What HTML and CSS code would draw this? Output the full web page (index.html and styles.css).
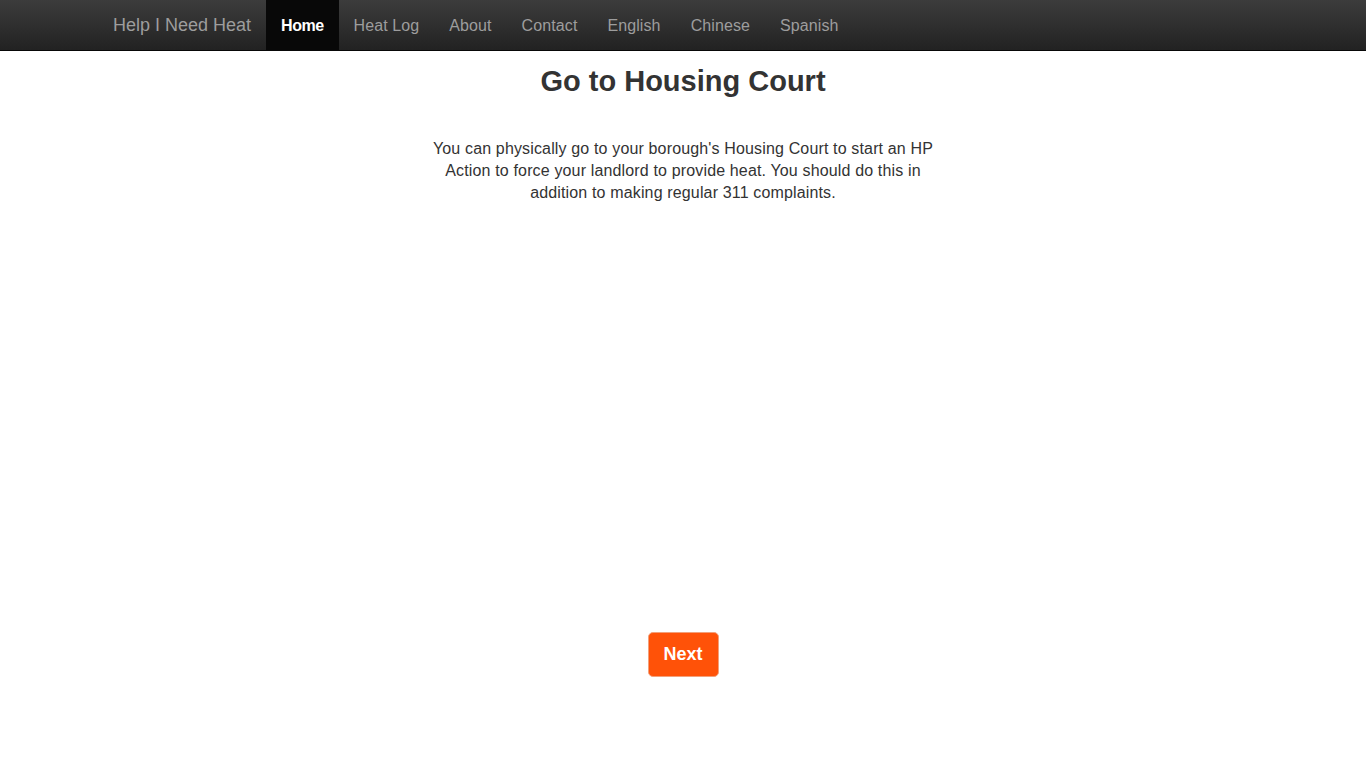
FILE: index.html
```html
<!DOCTYPE html>
<html>
<head>
<meta charset="utf-8">
<link rel="stylesheet" href="styles.css">
</head>
<body>
<nav class="navbar">
  <div class="nav-inner">
    <a class="brand" href="#">Help I Need Heat</a>
    <ul class="nav-links">
      <li><a class="active" href="#">Home</a></li>
      <li><a href="#">Heat Log</a></li>
      <li><a href="#">About</a></li>
      <li><a href="#">Contact</a></li>
      <li><a href="#">English</a></li>
      <li><a href="#">Chinese</a></li>
      <li><a href="#">Spanish</a></li>
    </ul>
  </div>
</nav>
<main class="content">
  <h1 class="title">Go to Housing Court</h1>
  <p class="lead-text">You can physically go to your borough's Housing Court to start an HP Action to force your landlord to provide heat. You should do this in addition to making regular 311 complaints.</p>
  <div class="spacer"></div>
  <button class="btn-next">Next</button>
</main>
</body>
</html>
```
FILE: styles.css
```css
* { box-sizing: border-box; }
body {
  margin: 0;
  font-family: "Liberation Sans", Arial, sans-serif;
  color: #333;
  background: #fff;
}
.navbar {
  height: 51px;
  background: linear-gradient(to bottom, #3c3c3c, #222);
  border-bottom: 1px solid #080808;
}
.nav-inner {
  width: 1170px;
  margin: 0 auto;
  display: flex;
  height: 50px;
}
.brand {
  font-size: 18px;
  line-height: 20px;
  padding: 15px 15px;
  color: #9d9d9d;
  text-decoration: none;
}
.nav-links {
  list-style: none;
  margin: 0;
  padding: 0;
  display: flex;
}
.nav-links a {
  display: block;
  padding: 16px 15px 14px;
  font-size: 16px;
  line-height: 20px;
  height: 50px;
  color: #9d9d9d;
  letter-spacing: 0.1px;
  text-decoration: none;
}
.nav-links a.active {
  background: #080808;
  color: #fff;
  font-weight: bold;
  letter-spacing: -0.5px;
}
.content {
  display: flex;
  flex-direction: column;
  align-items: center;
  text-align: center;
}
.title {
  font-size: 29px;
  line-height: 33px;
  font-weight: bold;
  margin: 14px 0 0;
  color: #333;
}
.lead-text {
  width: 520px;
  font-size: 16px;
  line-height: 22px;
  letter-spacing: 0.15px;
  margin: 40px 0 0;
  color: #333;
}
.spacer { height: 428px; }
.btn-next {
  width: 71px;
  height: 45px;
  background: #ff5208;
  color: #fff;
  font-family: "Liberation Sans", Arial, sans-serif;
  font-weight: bold;
  font-size: 18px;
  border: 1px solid #f3a07a;
  border-radius: 5px;
  padding: 0;
}
```
